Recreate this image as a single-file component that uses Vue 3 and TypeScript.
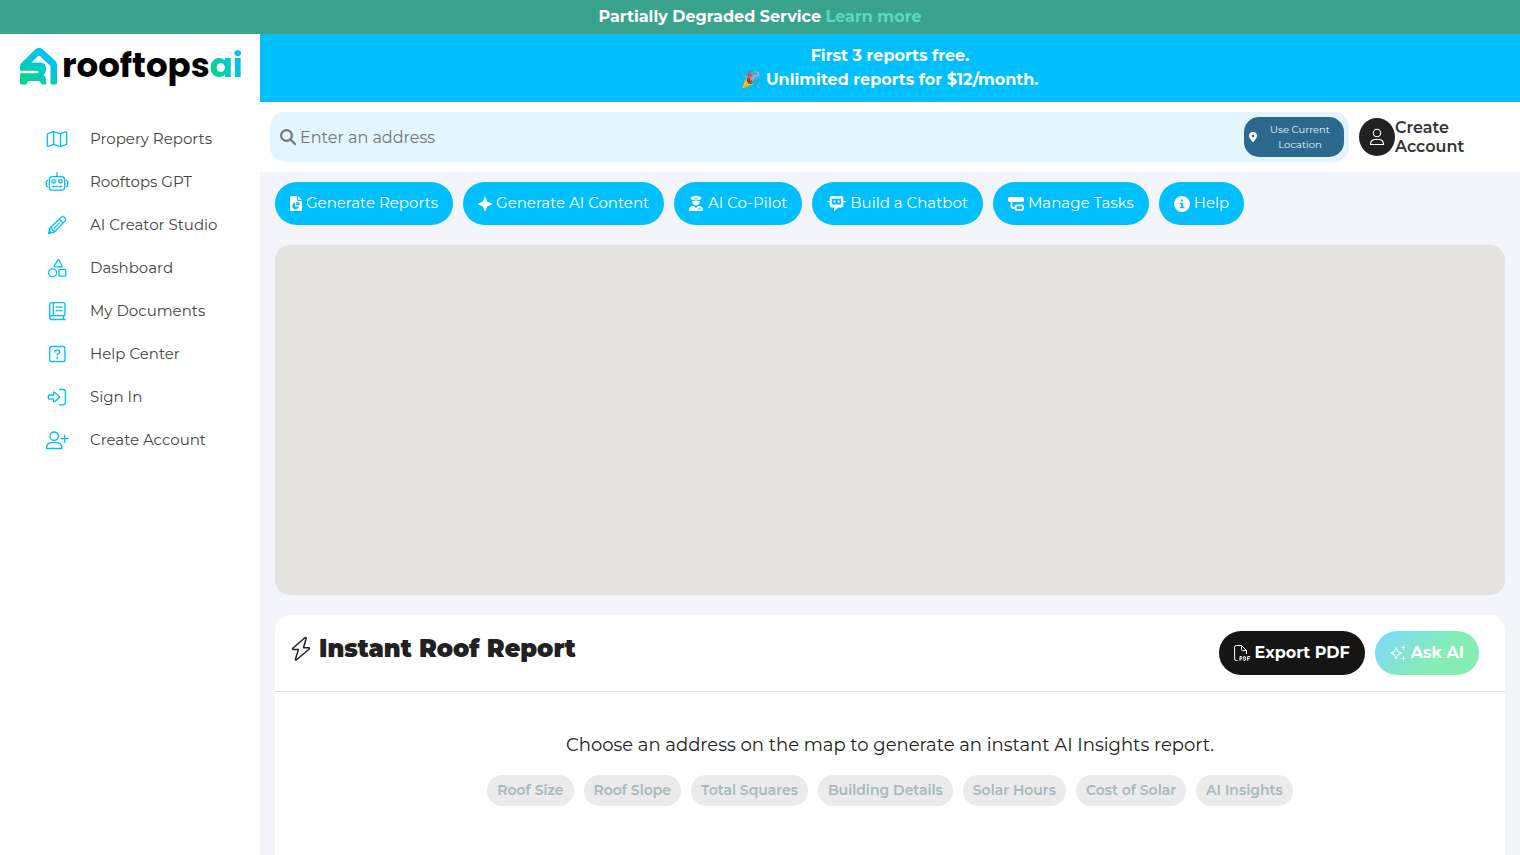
<script setup lang="ts">
import { ref } from 'vue'

interface NavItem {
  label: string
  paths: string[]
}

interface Action {
  label: string
  width: number
  height: number
  path: string
}

const address = ref('')

const navItems: NavItem[] = [
  {
    label: 'Propery Reports',
    paths: ['M8.7 4.6 3 6.6a1 1 0 0 0-.7.9v10.9c0 .7.6 1.100 1.200.9l5.200-2 6.800 2.300 5.500-2a1 1 0 0 0 .7-.9V5.700c0-.7-.6-1.100-1.200-.9l-5 2zM8.700 4.600v12.700M15.500 6.800v12.800'],
  },
  {
    label: 'Rooftops GPT',
    paths: [
      'M12 2.700v4M7 6.700h10a2.600 2.600 0 0 1 2.600 2.600v8.200a2.600 2.600 0 0 1-2.600 2.600H7a2.600 2.600 0 0 1-2.600-2.600V9.300A2.600 2.600 0 0 1 7 6.700z',
      'M10.300 11.300a1.700 1.700 0 1 1-3.400 0a1.700 1.700 0 1 1 3.400 0M17.100 11.300a1.700 1.700 0 1 1-3.400 0a1.700 1.700 0 1 1 3.400 0M7.500 16.500h2M11 16.500h2M14.500 16.500h2M2.600 10.300q-1.300.2-1.300 1.500v3.400q0 1.300 1.300 1.500M21.400 10.300q1.300.2 1.300 1.500v3.400q0 1.300-1.300 1.500',
    ],
  },
  {
    label: 'AI Creator Studio',
    paths: ['M3.500 20.600 5 14.800 16.200 4.400a2.200 2.200 0 0 1 3.100 0l.6.6a2.200 2.200 0 0 1 0 3.100L9.300 19zM5 14.800l1.800.4.5 1.800 1.800.4.2 1.600M14.300 6.200l3.700 3.800M9 15.100l5.200-5M3.500 20.600l2.200-2.200'],
  },
  {
    label: 'Dashboard',
    paths: ['M13 3.800 9.200 10a.6.600 0 0 0 .5.900h6.900a.6.600 0 0 0 .5-.9L13.800 3.800a.5.500 0 0 0-.8 0z', 'M11.500 16.800a4 4 0 1 1-8 0a4 4 0 1 1 8 0M14.700 13.300h5.400q.7 0 .7.700v5.400q0 .7-.7.700h-5.400q-.7 0-.7-.7V14q0-.7.7-.7z'],
  },
  {
    label: 'My Documents',
    paths: ['M20 20.500H6.700a2 2 0 0 1-2-2V6A2.300 2.300 0 0 1 7 3.700h11.700a1.200 1.200 0 0 1 1.200 1.200v10.600a1.200 1.200 0 0 1-1.200 1.200h-12a1.900 1.900 0 0 0-2 1.800M8.300 3.700v13M11 8.200h6M11 11.700h6M18.500 16.700v3.800'],
  },
  {
    label: 'Help Center',
    paths: ['M6.700 4.500h11.200a2 2 0 0 1 2 2v11.200a2 2 0 0 1-2 2H6.700a2 2 0 0 1-2-2V6.500a2 2 0 0 1 2-2z', 'M9.800 10V9.500q0-1.300 1.400-1.300h2q1.600 0 1.600 1.500 0 .9-.9 1.400l-1.600.9v1.200M12.300 15.200v1.300'],
  },
  {
    label: 'Sign In',
    paths: ['M14.500 4.500h3.400a2.500 2.500 0 0 1 2.500 2.500v10.300a2.500 2.500 0 0 1-2.500 2.500h-3.400', 'M4.200 10h4.400V7.800q.1-1.100 1-.5l4.600 4.200q.6.600 0 1.200l-4.600 4.100q-.9.500-1-.5v-2.200H4.200q-.8 0-.8-.8v-2.500q0-.8.800-.8z'],
  },
  {
    label: 'Create Account',
    paths: ['M13.400 8.200a4.200 4.200 0 1 1-8.400 0a4.200 4.200 0 1 1 8.400 0M1.600 20.500q-.2-6 5.600-6.200h4q5.800.2 5.600 6.200zM19.600 7.200v7M16.100 10.700h7'],
  },
]

const actions: Action[] = [
  {
    label: 'Generate Reports',
    width: 12,
    height: 15,
    path: 'M1.500 0H7v4q0 1 1 1h4v8.500a1.500 1.500 0 0 1-1.500 1.500h-9A1.500 1.500 0 0 1 0 13.500v-12A1.500 1.500 0 0 1 1.500 0zM8 0l4 4H8zM5 6.700A3.300 3.300 0 1 0 8.800 10.500H5zM6.300 5.800v3.400h3.500a3.500 3.500 0 0 0-3.500-3.400z',
  },
  {
    label: 'Generate AI Content',
    width: 14,
    height: 14,
    path: 'M7 0q.5 0 .7.500L9.300 4.700 13.500 6.300q.5.200.5.700t-.5.700L9.300 9.300 7.700 13.500Q7.500 14 7 14t-.7-.5L4.700 9.300.5 7.700Q0 7.500 0 7t.5-.7L4.700 4.700 6.300.5Q6.500 0 7 0z',
  },
  {
    label: 'AI Co-Pilot',
    width: 15,
    height: 15,
    path: 'M1.800 1.200Q7-1 12.200 1.200q.5 1-.4 1.900L11 4.200Q7 3 3 4.200L2.200 3.100q-.9-.9-.4-1.900zM5 1.700v.8h4v-.8zM3.200 4.900Q7 4 10.800 4.900v.7a3.800 3.800 0 1 1-7.600 0zM3.500 9.900h1l2.500 2 2.500-2h1q3.400.3 3.500 4.100v.6q0 .4-.4.4H.4q-.4 0-.4-.4V14q.1-3.800 3.500-4.100zM8.700 12.600v.8h3v-.8z',
  },
  {
    label: 'Build a Chatbot',
    width: 19,
    height: 15,
    path: 'M4.500 0h10A1.800 1.800 0 0 1 16.300 1.800V5h2.100q.6 0 .6.600t-.6.600h-2.100v3.500a1.800 1.800 0 0 1-1.800 1.800h-3L7.700 14.800Q7 15.300 7 14.400v-2.900H4.500a1.800 1.800 0 0 1-1.800-1.800V6.200H.6Q0 6.200 0 5.600T.6 5h2.100V1.800A1.800 1.800 0 0 1 4.500 0zM5.600 2.700q-.8 0-.8.800v4.200q0 .8.800.8h7.800q.8 0 .8-.8V3.500q0-.8-.8-.8zM6.500 4.600h1.800v1.800H6.500zM10.700 4.600h1.800v1.800h-1.800z',
  },
  {
    label: 'Manage Tasks',
    width: 16,
    height: 14,
    path: 'M1.700 0h12.600q1.700 0 1.700 1.700v1.600q0 1.700-1.700 1.700H4.400v4q0 1 1 1h1.300V9.500q0-2 2-2h5.300q2 0 2 2v2.200q0 2-2 2H8.700q-2 0-2-1.700H5.200Q2.600 12 2.600 9V5h-.9Q0 5 0 3.300V1.700Q0 0 1.700 0zM9 9.300q-.5 0-.5.500v1.500q0 .6.500.6h4.700q.5 0 .5-.6V9.800q0-.5-.5-.5z',
  },
  {
    label: 'Help',
    width: 16,
    height: 16,
    path: 'M8 0a8 8 0 1 1 0 16A8 8 0 0 1 8 0zM7 3.600v2h2v-2zM5.900 6.800v1.500h1.200v2.500H5.900v1.500h4.400v-1.500H8.900v-4z',
  },
]

const insights = ['Roof Size', 'Roof Slope', 'Total Squares', 'Building Details', 'Solar Hours', 'Cost of Solar', 'AI Insights']
</script>

<template>
  <div class="app">
    <div class="status">Partially Degraded Service <a href="#">Learn more</a></div>
    <div class="shell">
      <aside class="sidebar">
        <a class="logo" href="#" aria-label="rooftopsai">
          <svg class="mark" viewBox="0 0 38 38" aria-hidden="true">
            <defs>
              <linearGradient id="markFill" gradientUnits="userSpaceOnUse" x1="6" y1="37" x2="30" y2="7">
                <stop offset="0" stop-color="#00d68a" />
                <stop offset="0.9" stop-color="#00c3f5" />
              </linearGradient>
            </defs>
            <path
              fill="url(#markFill)"
              d="M1 16.500 15.500 2.200Q19 -.8 22.500 2.200L35.500 14q1.500 1.500 1.500 3.500V36q0 1.500-1.500 1.500h-3.500q-1.500 0-1.500-1.500V19L20.500 9.500q-1.500-1.500-3 0L11.500 15.500h8.500q6 0 6 6 0 4.500-2.500 6.500 2.300 1 2.300 4v2q0 1 .7 1.500v.5q0 1.500-1.500 1.500h-3L19.500 34H8.500q-1 0-1.500 2t-2 1.500H1.500Q0 37.500 0 36v-8.500Q0 26.300 1.200 26.300h16q1.300 0 1.300-1.300t-1.300-1.300H1.200Q0 23.700 0 22.500v-3.500q0-1.500 1-2.500z"
            />
          </svg>
          <span class="wordmark">rooftops<span class="ai">ai</span></span>
        </a>
        <nav class="nav" aria-label="Main">
          <a v-for="item in navItems" :key="item.label" href="#">
            <svg viewBox="0 0 24 24" aria-hidden="true">
              <path v-for="d in item.paths" :key="d" :d="d" />
            </svg>
            <span>{{ item.label }}</span>
          </a>
        </nav>
      </aside>

      <div class="content">
        <div class="promo">
          <div>First 3 reports free.</div>
          <div>🎉 Unlimited reports for $12/month.</div>
        </div>

        <header class="header">
          <form class="search" @submit.prevent>
            <svg class="lens" viewBox="0 0 16 16" aria-hidden="true">
              <circle cx="6.500" cy="6.500" r="5.400" />
              <path d="m10.500 10.500 4.500 4.500" />
            </svg>
            <input v-model="address" type="text" placeholder="Enter an address" aria-label="Enter an address" />
            <button class="locate" type="button">
              <svg viewBox="0 0 8 10" aria-hidden="true">
                <path fill-rule="evenodd" d="M4 0a4 4 0 0 1 4 4c0 1.600-2.200 4.500-3.400 5.700a.8.800 0 0 1-1.200 0C2.200 8.500 0 5.600 0 4a4 4 0 0 1 4-4zM4 2.700a1.300 1.300 0 1 0 0 2.600 1.300 1.300 0 0 0 0-2.600z" />
              </svg>
              <span>Use Current Location</span>
            </button>
          </form>
          <a class="account" href="#">
            <span class="avatar">
              <svg viewBox="0 0 16 18" aria-hidden="true">
                <path d="M11.700 5a3.700 3.700 0 1 1-7.400 0a3.700 3.700 0 1 1 7.400 0M1.500 16.500q0-5 5-5h3q5 0 5 5z" />
              </svg>
            </span>
            <span class="account-label">Create Account</span>
          </a>
        </header>

        <main class="main">
          <div class="actions">
            <button v-for="action in actions" :key="action.label" type="button">
              <svg :width="action.width" :height="action.height" :viewBox="`0 0 ${action.width} ${action.height}`" aria-hidden="true">
                <path fill-rule="evenodd" :d="action.path" />
              </svg>
              <span>{{ action.label }}</span>
            </button>
          </div>

          <section class="map" aria-label="Map"></section>

          <section class="report">
            <div class="report-head">
              <h1>
                <svg viewBox="0 0 20 26" aria-hidden="true">
                  <path d="M14.200 1.500 1.800 12.200q-.8.900.4 1.200h5.300L4.500 23q-.2 1.500 1 .8L18.200 13q.7-.9-.4-1.200h-5.300L15.200 2.300q.1-1.200-1-.8z" />
                </svg>
                <span>Instant Roof Report</span>
              </h1>
              <div class="tools">
                <button class="export" type="button">
                  <svg viewBox="0 0 17 16" aria-hidden="true">
                    <path d="M3.500 15.500H2.300A1.700 1.700 0 0 1 .6 13.800V2.200A1.700 1.700 0 0 1 2.300.5h5.200l5 5v3.500M7.500.500v4.200q0 .8.800.8h4.200" />
                    <path d="M6 15.800V11.500h1q1.100 0 1.100 1.200T7 14H6M9.800 11.500v4h.7q1.200 0 1.200-1.400v-1.200q0-1.400-1.200-1.400zM13.700 15.800v-4.300h2.500M13.700 13.600h2" />
                  </svg>
                  <span>Export PDF</span>
                </button>
                <button class="ask" type="button">
                  <svg viewBox="0 0 17 16" aria-hidden="true">
                    <path d="M6.200 2.500 7.900 6.600 12 8.200 7.900 9.800 6.200 13.900 4.500 9.800.5 8.200 4.500 6.600zM13.500.500v4M11.500 2.500h4M13.500 11.500v4M11.500 13.500h4" />
                  </svg>
                  <span>Ask AI</span>
                </button>
              </div>
            </div>
            <div class="report-body">
              <p>Choose an address on the map to generate an instant AI Insights report.</p>
              <ul>
                <li v-for="insight in insights" :key="insight">{{ insight }}</li>
              </ul>
            </div>
          </section>
        </main>
      </div>
    </div>
  </div>
</template>

<style>
body {
  margin: 0;
  background: #f4f5fa;
}
</style>

<style scoped>
* {
  box-sizing: border-box;
}

.app {
  display: flex;
  flex-direction: column;
  height: 100vh;
  overflow: hidden;
  color: #212121;
  font-family: Montserrat, Inter, "Noto Sans", sans-serif;
  font-size: 16px;
  line-height: 24px;
}

a {
  color: inherit;
  text-decoration: none;
}

button,
input {
  border: 0;
  font: inherit;
}

button {
  cursor: pointer;
}

svg {
  flex: none;
}

.status {
  flex: none;
  padding: 5px;
  background: #3aa38c;
  color: #fff;
  font-weight: 700;
  text-align: center;
}

.status a {
  color: #5bd9bd;
}

.shell {
  display: flex;
  flex: 1;
  min-height: 0;
}

.sidebar {
  flex: none;
  width: 260px;
  background: #fff;
}

.logo {
  display: flex;
  align-items: center;
  gap: 4px;
  height: 64px;
  padding: 0 20px;
}

.mark {
  width: 38px;
  height: 38px;
}

.wordmark {
  padding-bottom: 2px;
  color: #000;
  font-family: Poppins, Inter, sans-serif;
  font-size: 34px;
  font-weight: 700;
  line-height: 48px;
}

.ai {
  background: linear-gradient(60deg, #00d68a 20%, #00c3f5 75%);
  background-clip: text;
  color: transparent;
}

.nav {
  padding-top: 20px;
}

.nav a {
  display: flex;
  align-items: center;
  gap: 21px;
  height: 43px;
  padding: 0 0 2px 45px;
  color: #444;
  font-size: 15px;
}

.nav svg {
  width: 24px;
  height: 24px;
  fill: none;
  stroke: #00bfff;
  stroke-width: 1.3;
  stroke-linejoin: round;
  stroke-linecap: round;
}

.content {
  flex: 1;
  min-width: 0;
  overflow: hidden;
}

.promo {
  padding: 10px;
  background: #00bfff;
  color: #fff;
  font-weight: 700;
  text-align: center;
}

.header {
  display: flex;
  gap: 10px;
  padding: 10px;
  background: #fff;
}

.search {
  display: flex;
  flex: 1;
  align-items: center;
  gap: 4px;
  height: 50px;
  padding: 5px 5px 5px 10px;
  border-radius: 15px;
  background: #e3f5ff;
}

.lens {
  width: 16px;
  height: 16px;
  fill: none;
  stroke: #757575;
  stroke-width: 2.200;
  stroke-linecap: round;
}

.search input {
  flex: 1;
  min-width: 0;
  padding: 2px 0 0;
  outline: 0;
  background: transparent;
}

.search input::placeholder {
  color: #757575;
}

.locate {
  display: flex;
  align-items: center;
  gap: 4px;
  width: 100px;
  height: 40px;
  padding: 0 5px;
  border-radius: 15px;
  background: #2b6a8e;
  color: #e3f5ff;
  font-size: 10px;
  line-height: 15px;
}

.locate svg {
  width: 8px;
  height: 10px;
  fill: #fff;
}

.locate span {
  flex: 1;
}

.account {
  display: flex;
  align-items: center;
  width: 151px;
  color: #333;
  font-weight: 600;
  line-height: 19px;
}

.avatar {
  display: flex;
  flex: none;
  align-items: center;
  justify-content: center;
  width: 36px;
  height: 38px;
  border-radius: 50%;
  background: #212121;
}

.avatar svg {
  width: 16px;
  height: 18px;
  fill: none;
  stroke: #fff;
  stroke-width: 1.100;
}

.account-label {
  max-width: 90px;
}

.main {
  padding: 10px 15px 0;
}

.actions {
  display: flex;
  gap: 10px;
}

.actions button {
  display: flex;
  align-items: center;
  gap: 4px;
  height: 43px;
  padding: 0 15px;
  border-radius: 22px;
  background: #00bfff;
  color: #fff;
  font-size: 15px;
  white-space: nowrap;
}

.actions span {
  padding-bottom: 2px;
}

.actions svg {
  fill: #fff;
}

.map {
  height: 350px;
  margin: 20px 0;
  border-radius: 15px;
  background: #e5e3df;
}

.report {
  min-height: 300px;
  border-radius: 15px;
  background: #fff;
}

.report-head {
  display: flex;
  justify-content: space-between;
  padding: 16px 26px 16px 16px;
  border-bottom: 1px solid #ddd;
}

h1 {
  display: flex;
  align-items: center;
  gap: 8px;
  height: 35px;
  margin: 0;
  font-size: 24px;
  font-weight: 900;
}

h1 svg {
  width: 20px;
  height: 26px;
  fill: none;
  stroke: #212121;
  stroke-width: 1.500;
  stroke-linejoin: round;
}

.tools {
  display: flex;
  gap: 10px;
}

.tools button {
  display: flex;
  align-items: center;
  gap: 4px;
  height: 44px;
  padding: 0 15px;
  border-radius: 22px;
  color: #fff;
  font-weight: 700;
}

.tools svg {
  width: 17px;
  height: 16px;
  fill: none;
  stroke: #fff;
}

.tools .export {
  background: #151515;
}

.tools .ask {
  background: linear-gradient(135deg, #7dd8ff, #84eeb5 60%);
}

.report-body {
  padding: 40px 20px;
  text-align: center;
}

.report-body p {
  margin: 0 0 17px;
  font-size: 18px;
  line-height: 26px;
}

ul {
  display: flex;
  justify-content: center;
  gap: 10px;
  margin: 0;
  padding: 0;
  list-style: none;
}

li {
  padding: 5px 10px;
  border-radius: 16px;
  background: #ebebeb;
  color: #a9b8bc;
  font-size: 14px;
  font-weight: 600;
  line-height: 21px;
}
</style>
